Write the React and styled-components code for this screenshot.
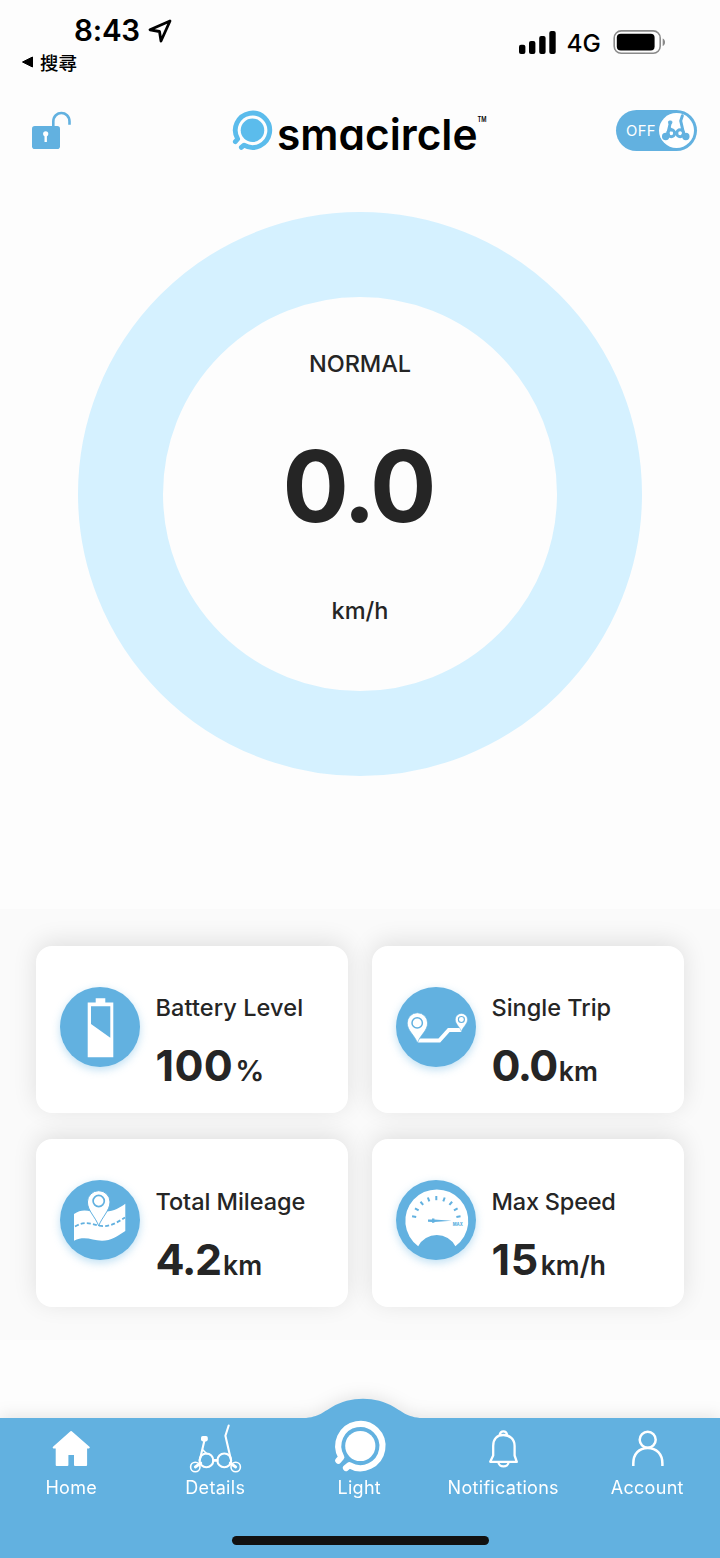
import React from "react";
import styled, { createGlobalStyle } from "styled-components";

const BLUE = "#62b1e0";
const INK = "#252525";

const GlobalStyle = createGlobalStyle`
  * { box-sizing: border-box; }
  body {
    margin: 0;
    background: #fdfdfd;
    color: ${INK};
    font-family: Inter, "Noto Sans CJK TC", sans-serif;
  }
  svg { display: block; overflow: visible; flex: none; }
`;

const Screen = styled.div`
  width: 720px;
  height: 1558px;
  display: flex;
  flex-direction: column;
  overflow: hidden;
`;

const StatusBar = styled.div`
  height: 91px;
  display: flex;
  justify-content: space-between;
  color: #000;
`;

const StatusLeft = styled.div`
  padding: 14px 0 0 21px;
`;

const TimeRow = styled.div`
  display: flex;
  align-items: center;
  gap: 8px;
  height: 33px;
  padding-left: 53px;
`;

const Time = styled.span`
  font-size: 29.5px;
  line-height: 33px;
  font-weight: 600;
  width: 66px;
  white-space: nowrap;
  letter-spacing: -0.2px;
`;

const BackRow = styled.div`
  display: flex;
  align-items: center;
  gap: 6px;
  height: 30px;
  font-size: 18.5px;
  line-height: 30px;
  font-weight: 500;
  font-family: "Noto Sans CJK TC", sans-serif;
`;

const StatusRight = styled.div`
  display: flex;
  align-items: center;
  height: 24px;
  margin: 30px 54px 0 0;
`;

const Network = styled.span`
  width: 57px;
  padding-left: 10.5px;
  font-size: 24.5px;
  line-height: 24px;
  padding-top: 2px;
  font-weight: 500;
  letter-spacing: -0.2px;
`;

const Header = styled.header`
  height: 78px;
  padding: 0 23px 0 31px;
  display: flex;
  align-items: center;
  justify-content: space-between;
`;

const Toggle = styled.div`
  width: 81px;
  height: 41px;
  border-radius: 21px;
  background: ${BLUE};
  display: flex;
  align-items: center;
  justify-content: space-between;
  padding: 0 3.5px 0 10px;
`;

const ToggleText = styled.span`
  color: #fff;
  font-size: 14.8px;
  line-height: 20px;
  padding-top: 1px;
  letter-spacing: 0.4px;
`;

const Knob = styled.span`
  width: 35px;
  height: 35px;
  border-radius: 50%;
  background: #fff;
  display: flex;
  align-items: center;
  justify-content: center;
  padding-bottom: 5px;
`;

const GaugeArea = styled.section`
  height: 740px;
  display: flex;
  justify-content: center;
  padding-top: 42.5px;
`;

const Gauge = styled.div`
  width: 564px;
  height: 564px;
  border-radius: 50%;
  border: 85px solid #d5f1ff;
  display: flex;
  flex-direction: column;
  align-items: center;
  padding-top: 51px;
`;

const GaugeLabel = styled.div`
  font-size: 23.5px;
  line-height: 32px;
  font-weight: 500;
  letter-spacing: ${(p) => p.$spacing || 0}px;
`;

const GaugeValue = styled.div`
  font-size: 98.5px;
  line-height: 120px;
  font-weight: 700;
  letter-spacing: -3px;
  padding-right: 4px;
  margin: 47px 0 48px;
`;

const Stats = styled.section`
  height: 431px;
  background: #fafafa;
  display: grid;
  grid-template-columns: 312px 312px;
  grid-auto-rows: 167.5px;
  gap: 26px 24px;
  padding: 36.5px 36px 0;
`;

const Card = styled.article`
  background: #fff;
  border-radius: 16px;
  box-shadow: 0 -4px 24px rgba(0, 0, 0, 0.11);
  display: flex;
  gap: 15.5px;
  padding: 41px 0 0 24px;
`;

const Badge = styled.div`
  width: 80px;
  height: 80px;
  border-radius: 50%;
  background: ${BLUE};
  box-shadow: 0 3px 8px rgba(98, 177, 224, 0.4);
`;

const CardText = styled.div`
  padding-top: 5.5px;
`;

const CardTitle = styled.div`
  font-size: 23.5px;
  line-height: 32px;
  font-weight: 500;
  white-space: nowrap;
  letter-spacing: ${(p) => p.$spacing}px;
`;

const CardValue = styled.div`
  margin-top: 15px;
  font-size: 43px;
  line-height: 52px;
  font-weight: 700;
  white-space: nowrap;
  letter-spacing: ${(p) => p.$spacing}px;
`;

const Unit = styled.span`
  font-size: ${(p) => p.$size}px;
  font-weight: 600;
  letter-spacing: 0.1px;
  margin-left: 2px;
`;

const Spacer = styled.div`
  flex: 1;
`;

const Nav = styled.nav`
  position: relative;
  height: 140px;
  background: ${BLUE};
  color: #fff;
  display: flex;
  flex-direction: column;
  align-items: center;
  filter: drop-shadow(0 -2px 8px rgba(0, 0, 0, 0.1));
`;

const Bump = styled.svg`
  position: absolute;
  left: 300px;
  top: -20px;
`;

const NavItems = styled.div`
  position: relative;
  width: 720px;
  height: 118px;
  padding-top: 2px;
  display: grid;
  grid-template-columns: repeat(5, 144px);
`;

const NavItem = styled.a`
  display: flex;
  flex-direction: column;
  align-items: center;
`;

const NavLabel = styled.span`
  font-size: 18px;
  line-height: 20px;
  margin: -2.5px 1.5px 0 0;
  letter-spacing: 0.3px;
`;

const HomeIndicator = styled.div`
  width: 257px;
  height: 9px;
  border-radius: 5px;
  background: #111;
`;

const pin = (x, y, r, tip) =>
  `M${x} ${tip}C${x - r * 0.25} ${tip - r * 0.75} ${x - r} ${y + r * 0.75} ${x - r} ${y}A${r} ${r} 0 0 1 ${x + r} ${y}C${x + r} ${y + r * 0.75} ${x + r * 0.25} ${tip - r * 0.75} ${x} ${tip}Z`;

function BatteryIcon() {
  return (
    <svg width="80" height="80" viewBox="0 0 80 80">
      <path fill="#fff" fillRule="evenodd" d="M35.7 11.2h9.6v4.3h8v54.7H27.7V15.5h8ZM31 19.2v17.8l19.3 13.8V19.2Z" />
    </svg>
  );
}

function TripIcon() {
  return (
    <svg width="80" height="80" viewBox="0 0 80 80">
      <path d="M22 53.6h21.3l9.5-10.6h12.6" fill="none" stroke="#fff" strokeWidth="4" />
      <path d={pin(21.4, 36, 10.2, 56)} fill="#fff" stroke={BLUE} strokeWidth="0.7" />
      <circle cx="21.2" cy="35.9" r="5.2" fill="none" stroke={BLUE} strokeWidth="1.5" />
      <path d={pin(65.4, 32.5, 6.1, 44.5)} fill="#fff" stroke={BLUE} strokeWidth="0.5" />
      <circle cx="65.4" cy="32.5" r="3" fill="none" stroke={BLUE} strokeWidth="1.1" />
    </svg>
  );
}

function MapIcon() {
  return (
    <svg width="80" height="80" viewBox="0 0 80 80">
      <path d="M14 34C20 29.5 26 30 31 31.5L46 31.6C54 31 60 27.5 65.3 23.7V51C58 56 51 60.7 42 60.7C32 60.5 25 55.5 14 60.7Z" fill="#fff" />
      <path d="M15 46.5C24 41 31 43.5 39 45.6C49 47.8 57 42.5 65 37.5" fill="none" stroke={BLUE} strokeWidth="1.8" strokeDasharray="4 2.2" />
      <path d={pin(38.7, 22, 11.3, 46)} fill="#fff" stroke={BLUE} strokeWidth="1" />
      <circle cx="38.7" cy="21" r="5.6" fill="none" stroke={BLUE} strokeWidth="1.7" />
    </svg>
  );
}

function SpeedIcon() {
  return (
    <svg width="80" height="80" viewBox="0 0 80 80">
      <path d="M22.2 66.3A31.5 31.5 0 1 1 59.4 66.3A21 21 0 0 0 22.2 66.3Z" fill="#fff" />
      {[-80, -60, -40, -20, 0, 20, 40, 60, 80].map((a) => (
        <path key={a} d="M40.3 16v4.2" stroke={BLUE} strokeWidth="2" transform={`rotate(${a} 40.3 40.6)`} />
      ))}
      <path d="M32 39.6L36 39.5V38.6H38.4V39.5L55.5 40.7L38.4 41.9V42.8H36V41.9L32 41.8Z" fill={BLUE} />
      <text x="56.8" y="46" fontSize="4.8" fontWeight="800" fill={BLUE} textLength="10" lengthAdjust="spacingAndGlyphs">MAX</text>
    </svg>
  );
}

function RingMark({ size, color }) {
  return (
    <svg width={size} height={size} viewBox="4 0 52 52">
      <g fill="none" stroke={color} strokeWidth="6.2" strokeLinecap="round" strokeLinejoin="round">
        <path d="M8.3 40.6L11.3 37.2A22.1 22.1 0 1 1 19.4 45.2L16 48" />
      </g>
      <circle cx="30.3" cy="26" r="15.1" fill={color} />
    </svg>
  );
}

function Scooter({ width, height, color, thick = 0 }) {
  return (
    <svg width={width} height={height} viewBox="0 0 60 60">
      <g fill="none" stroke={color} strokeLinecap="round" strokeLinejoin="round">
        <g strokeWidth={1.6 + thick}>
          <circle cx="9.3" cy="47" r="4.7" />
          <circle cx="49.7" cy="47" r="4.7" />
          <path d="M17 30l4 4" />
        </g>
        <g strokeWidth={2.1 + thick}>
          <circle cx="20.4" cy="40.4" r="6.9" />
          <circle cx="38.3" cy="40.4" r="6.9" />
          <path d="M18.3 21L13.8 40M42.7 5.5L39.4 15.8L45 40" />
        </g>
        <path strokeWidth={2.8 + thick} d="M27.6 40.4h3.6M9.3 47l5.5-4M49.7 47l-5.5-4" />
      </g>
      <rect
        x="15" y="16" width="6.8" height="5.4" rx="1.8"
        fill={color} stroke={color} strokeWidth={thick / 2}
      />
    </svg>
  );
}

function HomeIcon() {
  return (
    <svg width="60" height="60" viewBox="0 0 60 60">
      <path
        d="M29.1 12L46.8 27.4H44.1V45H33V35.2Q33 34 31.8 34H26.6Q25.4 34 25.4 35.2V45H14.7V27.4H11.7Z"
        fill="#fff" stroke="#fff" strokeWidth="2" strokeLinejoin="round"
      />
    </svg>
  );
}

function BellIcon() {
  return (
    <svg width="60" height="60" viewBox="0 0 60 60">
      <g fill="none" stroke="#fff" strokeWidth="2.3" strokeLinejoin="round">
        <path d="M16.2 41.8L19.2 35.5V26C19.2 19 23.2 15 29.4 15S40.6 19 40.6 26V35.5L42.8 41.8Z" />
        <path d="M25.8 15.5C25.5 9.9 33.3 9.9 33 15.5M24.4 42C24.6 47.8 34.4 47.8 34.6 42" />
      </g>
    </svg>
  );
}

function AccountIcon() {
  return (
    <svg width="60" height="60" viewBox="0 0 60 60">
      <g fill="none" stroke="#fff" strokeWidth="2.5">
        <circle cx="29.7" cy="19.7" r="8" />
        <path d="M15.3 46V43.5C15.3 34 21 28 29.7 28S44.4 34 44.4 43.5V46" />
      </g>
    </svg>
  );
}

const LockSvg = styled.svg`
  margin-top: 2px;
`;

function LockIcon() {
  return (
    <LockSvg width="40" height="38" viewBox="0 0 40 38">
      <path d="M22.3 15V9.6C22.3 -1.8 38.5 -1.8 38.5 9.6V12.7" fill="none" stroke={BLUE} strokeWidth="2.6" />
      <rect x="1" y="14" width="28" height="23" rx="2.8" fill={BLUE} />
      <circle cx="14.7" cy="21.8" r="2.6" fill="#fff" />
      <path d="M14.7 22v8" stroke="#fff" strokeWidth="2.4" />
    </LockSvg>
  );
}

const LogoRow = styled.div`
  display: flex;
  align-items: center;
  margin-left: 31px;
`;

const WordMark = styled.svg`
  margin-left: 4px;
  font-family: Inter, sans-serif;
  font-feature-settings: "cv11", "ss03";
`;

function Logo() {
  return (
    <LogoRow>
      <RingMark size={40.5} color="#5bbcec" />
      <WordMark width="210" height="40" viewBox="277 110 210 40">
        <text x="278" y="150.2" fontSize="43" fontWeight="600" textLength="200.5" lengthAdjust="spacingAndGlyphs" fill="#000">
          smacircle
        </text>
        <text x="478.6" y="121.5" fontSize="7" fontWeight="600" textLength="9" lengthAdjust="spacingAndGlyphs" fill="#000">
          TM
        </text>
      </WordMark>
    </LogoRow>
  );
}

const stats = [
  { title: "Battery Level", titleGap: 0.1, value: "100", valueGap: 0.4, unit: "%", unitSize: 29, Icon: BatteryIcon },
  { title: "Single Trip", titleGap: 0, value: "0.0", valueGap: -1.5, unit: "km", unitSize: 26.6, Icon: TripIcon },
  { title: "Total Mileage", titleGap: -0.05, value: "4.2", valueGap: -1.2, unit: "km", unitSize: 26.6, Icon: MapIcon },
  { title: "Max Speed", titleGap: -0.2, value: "15", valueGap: 0.6, unit: "km/h", unitSize: 26.4, Icon: SpeedIcon },
];

const LightSlot = styled.span`
  width: 60px;
  height: 60px;
  display: flex;
  justify-content: center;
`;

const tabs = [
  { label: "Home", icon: <HomeIcon /> },
  { label: "Details", icon: <Scooter width={60} height={60} color="#fff" /> },
  { label: "Light", icon: <LightSlot><RingMark size={52} color="#fff" /></LightSlot> },
  { label: "Notifications", icon: <BellIcon /> },
  { label: "Account", icon: <AccountIcon /> },
];

export default function App() {
  return (
    <Screen>
      <GlobalStyle />
      <StatusBar>
        <StatusLeft>
          <TimeRow>
            <Time>8:43</Time>
            <svg width="24" height="24" viewBox="0 0 24 24">
              <path d="M22 2L2 10.8L11.5 12.5L13 22Z" fill="none" stroke="#000" strokeWidth="2.8" strokeLinejoin="round" />
            </svg>
          </TimeRow>
          <BackRow>
            <svg width="13" height="12" viewBox="0 0 13 12">
              <path d="M1.5 6L11.5 1V11Z" stroke="#000" strokeLinejoin="round" />
            </svg>
            搜尋
          </BackRow>
        </StatusLeft>
        <StatusRight>
          <svg width="37" height="24" viewBox="0 0 37 24">
            <rect x="0" y="14.8" width="6.4" height="9.2" rx="2" />
            <rect x="10" y="11" width="6.4" height="13" rx="2" />
            <rect x="20.2" y="6" width="6.4" height="18" rx="2" />
            <rect x="30.3" y="1" width="6.4" height="23" rx="2" />
          </svg>
          <Network>4G</Network>
          <svg width="53" height="24" viewBox="0 0 53 24">
            <rect x="1.2" y="0.9" width="46" height="22.4" rx="7" fill="none" stroke="#8a8a8a" strokeWidth="1.6" />
            <rect x="3.8" y="3.8" width="37.8" height="16.8" rx="4" />
            <path d="M49.7 8.4C52.8 9.6 52.8 14.8 49.7 16Z" fill="#8a8a8a" />
          </svg>
        </StatusRight>
      </StatusBar>
      <Header>
        <LockIcon />
        <Logo />
        <Toggle>
          <ToggleText>OFF</ToggleText>
          <Knob>
            <Scooter width={30} height={30} color={BLUE} thick={3.8} />
          </Knob>
        </Toggle>
      </Header>
      <GaugeArea>
        <Gauge>
          <GaugeLabel $spacing={-0.1}>NORMAL</GaugeLabel>
          <GaugeValue>0.0</GaugeValue>
          <GaugeLabel>km/h</GaugeLabel>
        </Gauge>
      </GaugeArea>
      <Stats>
        {stats.map(({ title, titleGap, value, valueGap, unit, unitSize, Icon }) => (
          <Card key={title}>
            <Badge><Icon /></Badge>
            <CardText>
              <CardTitle $spacing={titleGap}>{title}</CardTitle>
              <CardValue $spacing={valueGap}>
                {value}
                <Unit $size={unitSize}>{unit}</Unit>
              </CardValue>
            </CardText>
          </Card>
        ))}
      </Stats>
      <Spacer />
      <Nav>
        <Bump width="126" height="21" viewBox="0 0 126 21">
          <path d="M0 20.2C18 20.2 23 14 32 9C50 -2 76 -2 94 9C103 14 108 20.2 126 20.2V21H0Z" fill={BLUE} />
        </Bump>
        <NavItems>
          {tabs.map(({ label, icon }) => (
            <NavItem key={label}>
              {icon}
              <NavLabel>{label}</NavLabel>
            </NavItem>
          ))}
        </NavItems>
        <HomeIndicator />
      </Nav>
    </Screen>
  );
}
